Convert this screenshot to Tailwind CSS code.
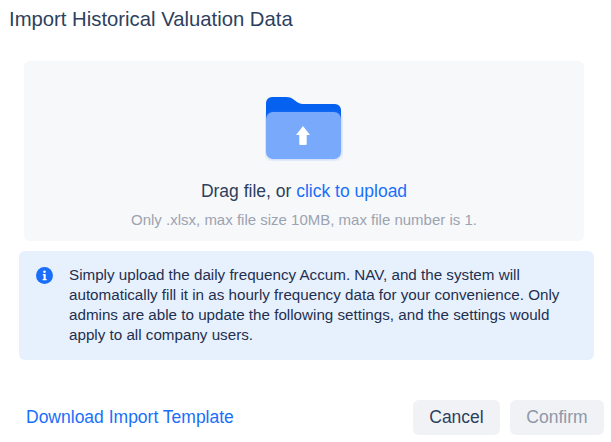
<!DOCTYPE html>
<html lang="en">
<head>
    <meta charset="UTF-8">
    <title>Import Historical Valuation Data</title>
    <script src="https://cdn.jsdelivr.net/npm/@tailwindcss/browser@4"></script>
</head>
<body class="bg-white w-[611px] h-[442px] overflow-hidden font-['Liberation_Sans',sans-serif] text-[#1f2f4f]">
    <!-- Title -->
    <h1 class="pl-[9px] pt-[7px] h-[61px] text-[20.3px] leading-6 font-normal text-[#2d3f5e]">Import Historical Valuation Data</h1>

    <!-- Upload area -->
    <div class="mx-[24px] w-[560px] h-[180px] bg-[#f7f8fa] rounded-md flex flex-col items-center pt-[34px]">
        <svg class="w-[78px] h-[66px]" viewBox="0 0 78 66" fill="none">
            <path d="M1 8a6 6 0 0 1 6-6h14c4 0 6 1 9 3.500 2.500 2 5 3.500 8 3.500h32a6 6 0 0 1 6 6v26H1z" fill="#0561f0"/>
            <rect x="1" y="17" width="75" height="47" rx="7" fill="#79a9fb" class="drop-shadow-[0_0_2px_rgba(60,130,250,0.45)]"/>
            <path d="M38 31l7 9h-3.300v9a1 1 0 0 1-1 1h-5.400a1 1 0 0 1-1-1v-9H31z" fill="#fff"/>
        </svg>
        <p class="mt-[18px] text-[17.5px] leading-6 text-[#2d3f5e]">Drag file, or <span class="text-[#1a6ffa]">click to upload</span></p>
        <p class="mt-[7px] text-[15px] leading-5 text-[#9ba3b1]">Only .xlsx, max file size 10MB, max file number is 1.</p>
    </div>

    <!-- Info notice -->
    <div class="ml-[19px] mt-[10px] w-[575px] h-[109px] bg-[#e7f1fe] rounded-md flex pl-[17px] pt-[14px]">
        <svg class="w-[17px] h-[17px] mt-[2px] shrink-0" viewBox="0 0 17 17">
            <circle cx="8.500" cy="8.500" r="8.500" fill="#1a6ffa"/>
            <circle cx="8.500" cy="4.700" r="1.300" fill="#fff"/>
            <path d="M6.800 7h2.900v5h1v1.200H6.600V12h1V8.200h-.8z" fill="#fff"/>
        </svg>
        <p class="ml-[16px] w-[510px] text-[15.2px] leading-5 text-[#1f2f4f]">Simply upload the daily frequency Accum. NAV, and the system will automatically fill it in as hourly frequency data for your convenience. Only admins are able to update the following settings, and the settings would apply to all company users.</p>
    </div>

    <!-- Footer -->
    <div class="mt-[40px] pl-[26px] pr-[7px] flex items-center justify-between">
        <a class="text-[17.5px] text-[#1a6ffa]">Download Import Template</a>
        <div class="flex gap-[10px]">
            <button class="w-[87px] h-[35px] rounded-md bg-[#f0f2f5] text-[17.5px] text-[#2d3f5e]">Cancel</button>
            <button class="w-[94px] h-[35px] rounded-md bg-[#f0f2f5] text-[17.5px] text-[#8e98a8]">Confirm</button>
        </div>
    </div>
</body>
</html>
